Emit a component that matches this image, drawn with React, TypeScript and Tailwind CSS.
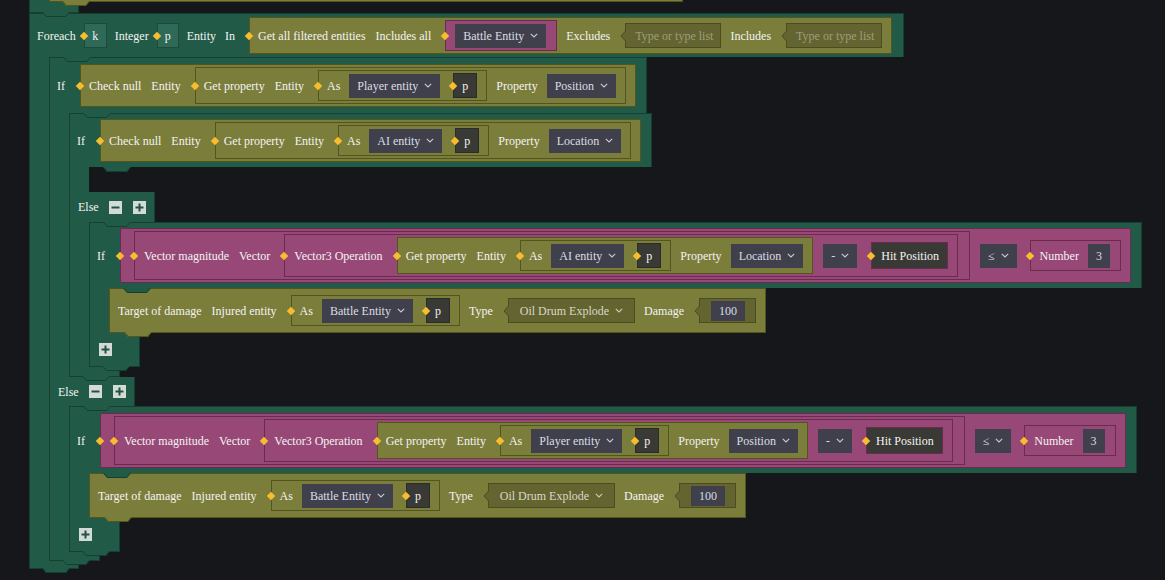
import React from "react";

const GREEN = "#215b47";
const GREEN_D = "#163f31";
const OLIVE = "#7b7d3b";
const OLIVE_D = "#53551f";

type RN = React.ReactNode;

function Lbl({ children }: { children: RN }) {
  return <span className="px-[1px] whitespace-nowrap leading-[14px] shrink-0">{children}</span>;
}

function Chev({ color = "#c9cad3" }: { color?: string }) {
  return (
    <svg width="8" height="5" viewBox="0 0 8 5" className="shrink-0">
      <path d="M0.8 0.8 L4 4 L7.2 0.8" fill="none" stroke={color} strokeWidth="1.1" />
    </svg>
  );
}

function DD({ t, cls = "" }: { t: string; cls?: string }) {
  return (
    <div className={`h-[24px] bg-[#3f404b] flex items-center gap-[6px] pl-[8px] pr-[8px] text-[#dcdde5] whitespace-nowrap shrink-0 ${cls}`}>
      <span className="leading-[14px]">{t}</span>
      <Chev />
    </div>
  );
}

function Diamond() {
  return <span className="absolute left-[-3px] top-1/2 -translate-y-1/2 w-[6px] h-[6px] rotate-45 bg-[#f8bd2f] z-[5]" />;
}

function In({ children, cls = "ml-[5px]" }: { children: RN; cls?: string }) {
  return (
    <div className={`relative flex items-center shrink-0 ${cls}`}>
      {children}
      <Diamond />
    </div>
  );
}

function VB({
  tone,
  h,
  pl,
  pr = "pr-[9px]",
  children,
}: {
  tone: "olive" | "pink";
  h: string;
  pl?: string;
  pr?: string;
  children: RN;
}) {
  const c = tone === "olive" ? "bg-[#7b7d3b] border-[#53551f]" : "bg-[#974877] border-[#6b2a50]";
  const p = pl ?? (tone === "olive" ? "pl-[7px]" : "pl-[8px]");
  return <div className={`${c} border ${h} ${p} ${pr} flex items-center gap-[8px] shrink-0`}>{children}</div>;
}

function Var({ t, w = "w-[24px]" }: { t: string; w?: string }) {
  return (
    <div className={`${w} h-[25px] bg-[#393935] border border-[#2b2b28] flex items-center justify-center shrink-0`}>
      <span className="leading-[14px]">{t}</span>
    </div>
  );
}

function KBox({ t, w }: { t: string; w: string }) {
  return (
    <div className={`${w} h-[25px] bg-[#2e6a57] border border-[#1c4a3b] flex items-center justify-center shrink-0`}>
      <span className="leading-[14px]">{t}</span>
    </div>
  );
}

function Slot({ children, cls, ml = "ml-[6px]" }: { children: RN; cls: string; ml?: string }) {
  return (
    <div className={`relative ${ml} h-[25px] bg-[#63642f] border border-[#4b4c20] flex items-center shrink-0 ${cls}`}>
      <svg className="absolute left-[-6px] top-1/2 -translate-y-1/2" width="7" height="10" viewBox="0 0 7 10">
        <polygon points="7,0 5.5,0 1,5 5.5,10 7,10" fill="#63642f" />
        <polyline points="5.5,0 1,5 5.5,10" fill="none" stroke="#4b4c20" strokeWidth="1" />
      </svg>
      {children}
    </div>
  );
}

function Tab({ fill, stroke, cls }: { fill: string; stroke: string; cls: string }) {
  return (
    <svg className={`absolute top-full z-10 ${cls}`} width="28" height="6" viewBox="0 0 28 6">
      <polygon points="0,0 4,5 24,5 28,0" fill={fill} />
      <polyline points="0.5,0 4.3,4.5 23.7,4.5 27.5,0" fill="none" stroke={stroke} strokeWidth="1" />
    </svg>
  );
}

function Btn({ plus }: { plus?: boolean }) {
  return (
    <svg width="13" height="13" viewBox="0 0 13 13" className="shrink-0">
      <rect width="13" height="13" fill="#d4dbd7" />
      <path d={plus ? "M2.5 6.5H10.5M6.5 2.5V10.5" : "M2.5 6.5H10.5"} stroke="#1f5443" strokeWidth="2" />
    </svg>
  );
}

function Header({
  children,
  py,
  gap = "gap-[8px]",
  pr = "pr-[10px]",
}: {
  children: RN;
  py: string;
  gap?: string;
  pr?: string;
}) {
  return (
    <div className={`relative bg-[#215b47] border-t border-l border-r border-[#163f31] flex items-center ${gap} pl-[6px] ${pr} shrink-0 ${py}`}>
      {children}
      <Tab fill={GREEN} stroke={GREEN_D} cls="left-[33px]" />
    </div>
  );
}

function Body({ children }: { children: RN }) {
  return (
    <div className="flex items-stretch">
      <div className="w-[20px] shrink-0 bg-[#215b47] border-l border-[#163f31]" />
      <div className="flex flex-col items-start">{children}</div>
    </div>
  );
}

function ElseRow({ h = "h-[30px]" }: { h?: string }) {
  return (
    <div className={`relative w-[86px] ${h} bg-[#215b47] border-l border-r border-[#163f31] flex items-center pl-[7px] shrink-0`}>
      <Lbl>Else</Lbl>
      <span className="ml-[9px] flex">
        <Btn />
      </span>
      <span className="ml-[11px] flex">
        <Btn plus />
      </span>
      <Tab fill={GREEN} stroke={GREEN_D} cls="left-[33px]" />
    </div>
  );
}

function Bottom({ h, plus, w = "w-[51px]" }: { h: string; plus?: boolean; w?: string }) {
  return (
    <div className={`relative ${w} ${h} bg-[#215b47] border-l border-r border-b border-[#163f31] shrink-0`}>
      {plus && (
        <div className="pl-[9px] pt-[10px] flex">
          <Btn plus />
        </div>
      )}
      <Tab fill={GREEN} stroke={GREEN_D} cls="left-[12px]" />
    </div>
  );
}

function GetProp({ who, prop }: { who: string; prop: string }) {
  return (
    <VB tone="olive" h="h-[37px]">
      <Lbl>Get property</Lbl>
      <Lbl>Entity</Lbl>
      <In>
        <VB tone="olive" h="h-[31px]">
          <Lbl>As</Lbl>
          <DD t={who} />
          <In>
            <Var t="p" />
          </In>
        </VB>
      </In>
      <Lbl>Property</Lbl>
      <DD t={prop} />
    </VB>
  );
}

function CheckNull({ who, prop }: { who: string; prop: string }) {
  return (
    <VB tone="olive" h="h-[43px]">
      <Lbl>Check null</Lbl>
      <Lbl>Entity</Lbl>
      <In>
        <GetProp who={who} prop={prop} />
      </In>
    </VB>
  );
}

function Hit() {
  return (
    <div className="h-[27px] bg-[#393935] border border-[#6b2a50] flex items-center pl-[9px] pr-[8px] shrink-0">
      <span className="leading-[14px] whitespace-nowrap">Hit Position</span>
    </div>
  );
}

function Cond({ who, prop }: { who: string; prop: string }) {
  return (
    <In cls="ml-[6px]">
      <VB tone="pink" h="h-[55px]">
        <In>
          <VB tone="pink" h="h-[49px]" pr="pr-[11px]">
            <Lbl>Vector magnitude</Lbl>
            <Lbl>Vector</Lbl>
            <In>
              <VB tone="pink" h="h-[43px]">
                <Lbl>Vector3 Operation</Lbl>
                <In>
                  <GetProp who={who} prop={prop} />
                </In>
                <DD t="-" cls="ml-[2px]" />
                <In cls="ml-[6px]">
                  <Hit />
                </In>
              </VB>
            </In>
          </VB>
        </In>
        <DD t="≤" cls="ml-[2px]" />
        <In>
          <VB tone="pink" h="h-[31px]" pr="pr-[10px]">
            <Lbl>Number</Lbl>
            <div className="w-[22px] h-[24px] bg-[#3f404b] flex items-center justify-center text-[#dcdde5] shrink-0">
              <span className="leading-[14px]">3</span>
            </div>
          </VB>
        </In>
      </VB>
    </In>
  );
}

function Target() {
  return (
    <div className="relative h-[45px] bg-[#7b7d3b] border border-[#53551f] flex items-center gap-[8px] pl-[7px] pr-[9px] shrink-0">
      <Lbl>Target of damage</Lbl>
      <Lbl>Injured entity</Lbl>
      <In>
        <VB tone="olive" h="h-[31px]">
          <Lbl>As</Lbl>
          <DD t="Battle Entity" />
          <In>
            <Var t="p" />
          </In>
        </VB>
      </In>
      <Lbl>Type</Lbl>
      <Slot cls="pl-[11px] pr-[11px] gap-[6px]">
        <span className="leading-[14px] whitespace-nowrap text-[#d8d8c8]">Oil Drum Explode</span>
        <Chev color="#cdcdb8" />
      </Slot>
      <Lbl>Damage</Lbl>
      <Slot cls="pl-[11px] pr-[10px]">
        <div className="h-[20px] px-[8px] bg-[#3f404b] flex items-center text-[#dcdde5]">
          <span className="leading-[14px]">100</span>
        </div>
      </Slot>
      <Tab fill={OLIVE} stroke={OLIVE_D} cls="left-[14px]" />
    </div>
  );
}

function Placeholder() {
  return (
    <Slot cls="pl-[9px] pr-[7px]">
      <span className="leading-[14px] whitespace-nowrap text-[#9d9e80]">Type or type list</span>
    </Slot>
  );
}

export default function App() {
  return (
    <div className="w-[1165px] h-[580px] overflow-hidden bg-[#16171b] font-['Liberation_Serif','Times_New_Roman',serif] text-[12px] text-[#f3f3f3]">
      <div className="flex flex-col items-start pl-[29px]">
        {/* remnant of previous block */}
        <div className="flex">
          <div className="w-[20px] shrink-0 bg-[#215b47] border-l border-[#163f31]" />
          <div className="relative w-[634px] h-[2px] bg-[#7b7d3b] border-b border-l border-r border-[#53551f]">
            <Tab fill={OLIVE} stroke={OLIVE_D} cls="left-[12px]" />
          </div>
        </div>
        <Bottom h="h-[11px]" w="w-[50px]" />

        {/* Foreach */}
        <div className="flex flex-col items-start">
          <Header py="pt-[3px] pb-[3px]" gap="gap-[7px]" pr="pr-[11px]">
            <Lbl>Foreach</Lbl>
            <In cls="">
              <KBox t="k" w="w-[23px]" />
            </In>
            <Lbl>Integer</Lbl>
            <In cls="">
              <KBox t="p" w="w-[22px]" />
            </In>
            <Lbl>Entity</Lbl>
            <Lbl>In</Lbl>
            <In cls="ml-[6px]">
              <VB tone="olive" h="h-[37px]">
                <Lbl>Get all filtered entities</Lbl>
                <Lbl>Includes all</Lbl>
                <In>
                  <VB tone="pink" h="h-[31px]" pl="pl-[9px]" pr="pr-[10px]">
                    <DD t="Battle Entity" />
                  </VB>
                </In>
                <Lbl>Excludes</Lbl>
                <Placeholder />
                <Lbl>Includes</Lbl>
                <Placeholder />
              </VB>
            </In>
          </Header>
          <Body>
            {/* If 1 */}
            <div className="flex flex-col items-start">
              <Header py="pt-[6px] pb-[6px]">
                <Lbl>If</Lbl>
                <In cls="ml-[6px]">
                  <CheckNull who="Player entity" prop="Position" />
                </In>
              </Header>
              <Body>
                {/* If 2 */}
                <div className="flex flex-col items-start">
                  <Header py="pt-[5px] pb-[5px]">
                    <Lbl>If</Lbl>
                    <In cls="ml-[6px]">
                      <CheckNull who="AI entity" prop="Location" />
                    </In>
                  </Header>
                  <Body>
                    <div className="h-[25px]" />
                  </Body>
                  <ElseRow />
                  <Body>
                    {/* If 3 */}
                    <div className="flex flex-col items-start">
                      <Header py="pt-[5px] pb-[5px]">
                        <Lbl>If</Lbl>
                        <Cond who="AI entity" prop="Location" />
                      </Header>
                      <Body>
                        <Target />
                      </Body>
                      <Bottom h="h-[34px]" plus />
                    </div>
                  </Body>
                  <Bottom h="h-[10px]" />
                </div>
              </Body>
              <ElseRow h="h-[29px]" />
              <Body>
                {/* If 4 */}
                <div className="flex flex-col items-start">
                  <Header py="pt-[6px] pb-[5px]">
                    <Lbl>If</Lbl>
                    <Cond who="Player entity" prop="Position" />
                  </Header>
                  <Body>
                    <Target />
                  </Body>
                  <Bottom h="h-[34px]" plus />
                </div>
              </Body>
              <Bottom h="h-[9px]" />
            </div>
          </Body>
          <Bottom h="h-[8px]" w="w-[50px]" />
        </div>
      </div>
    </div>
  );
}
